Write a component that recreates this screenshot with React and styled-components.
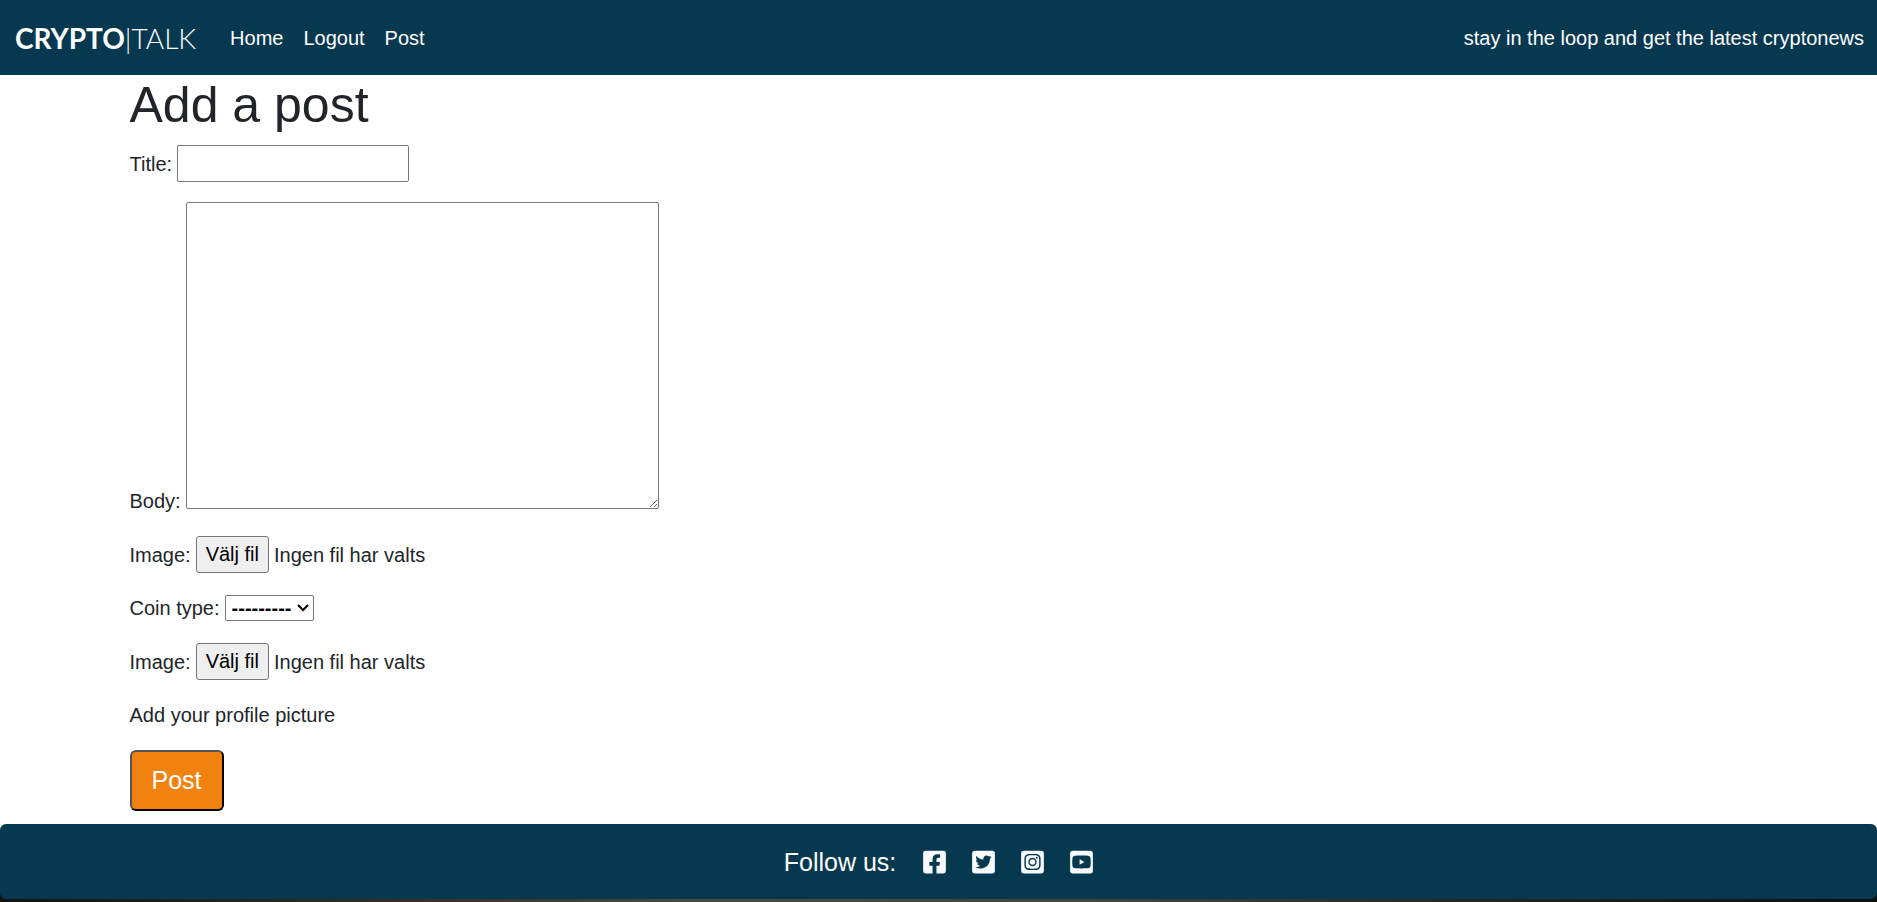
import React from "react";
import styled, { createGlobalStyle } from "styled-components";
import {
  FaFacebookSquare,
  FaTwitterSquare,
  FaInstagramSquare,
  FaYoutubeSquare,
} from "react-icons/fa";

const GlobalStyle = createGlobalStyle`
  *, *::before, *::after { box-sizing: border-box; }
  body {
    margin: 0;
    background: #ffffff;
    color: #212529;
    font-family: Arial, "Liberation Sans", sans-serif;
    font-size: 20px;
    line-height: 30px;
  }
  input, textarea, select, button { font: inherit; }
`;

const Navbar = styled.header`
  display: flex;
  align-items: center;
  min-height: 75px;
  padding: 0 13px 0 15px;
  background: #063850;
  color: #ffffff;
`;

const Brand = styled.a`
  margin-right: 24px;
  color: #ffffff;
  font-family: Lato, sans-serif;
  font-size: 28px;
  font-weight: 300;
  text-decoration: none;

  strong { font-weight: 700; }
`;

const Nav = styled.nav`
  display: flex;
  flex: 1;
`;

const NavLink = styled.a`
  padding: 10px;
  color: #ffffff;
  text-decoration: none;
`;

const Tagline = styled.span`
  white-space: nowrap;
`;

const Container = styled.main`
  max-width: 1650px;
  margin: 0 auto;
  padding: 0 16px 13px;
`;

const Heading = styled.h1`
  margin: 0 0 10px;
  font-size: 50px;
  font-weight: 400;
  line-height: 60px;
`;

const PostForm = styled.form`
  display: flex;
  flex-direction: column;
  align-items: flex-start;
  gap: 20px;
`;

const Field = styled.div`
  display: flex;
  align-items: ${(p) => p.$align || "center"};
  gap: 5px;
`;

const TextInput = styled.input`
  width: 232px;
  height: 37px;
  padding: 1px 2px;
  border: 1px solid #767676;
  border-radius: 2px;
  background: #ffffff;
`;

const TextArea = styled.textarea`
  display: block;
  width: 473px;
  height: 307px;
  margin-bottom: 7px;
  padding: 2px;
  border: 1px solid #767676;
  border-radius: 2px;
  background: #ffffff;
  resize: vertical;
`;

const SelectBox = styled.div`
  position: relative;
  display: flex;
  margin: 2px 0;

  svg {
    position: absolute;
    top: 9px;
    right: 5px;
    pointer-events: none;
  }
`;

const Select = styled.select`
  appearance: none;
  width: 89px;
  height: 26px;
  padding: 0 6px;
  border: 1px solid #767676;
  border-radius: 2px;
  background-color: #ffffff;
  color: #000000;
  font-weight: 700;
  line-height: 24px;
`;

const FilePicker = styled.label`
  position: relative;
  display: flex;
  align-items: center;
  gap: 5px;
`;

const HiddenFile = styled.input`
  position: absolute;
  inset: 0;
  width: 100%;
  opacity: 0;
`;

const FileButton = styled.span`
  height: 37px;
  padding: 2px 9px;
  border: 1px solid #767676;
  border-radius: 3px;
  background: #efefef;
  color: #000000;
`;

const Hint = styled.p`
  margin: 0;
`;

const SubmitButton = styled.button`
  padding: 10px 20px;
  border: 2px outset #000000;
  border-radius: 6px;
  background: #f2820f;
  color: #ffffff;
  font-size: 25px;
  line-height: 37px;
`;

const FooterArea = styled.div`
  padding-bottom: 3px;
  background:
    linear-gradient(#ffffff, #ffffff) top / 100% 50% no-repeat,
    linear-gradient(90deg, #15110f, #3a342c 25%, #4c493f 37%, #45443d 58%, #25221f 80%, #100d0e);
`;

const Footer = styled.footer`
  display: flex;
  align-items: center;
  justify-content: center;
  gap: 27px;
  min-height: 75px;
  border-radius: 6px;
  background: #063850;
  color: #ffffff;
  font-size: 25px;
`;

const SocialList = styled.div`
  display: flex;
  gap: 26px;
`;

const SocialLink = styled.a`
  display: flex;
  color: #f8f9fa;

  svg { width: 23px; height: 26px; }
`;

const socials = [
  ["Facebook", FaFacebookSquare],
  ["Twitter", FaTwitterSquare],
  ["Instagram", FaInstagramSquare],
  ["YouTube", FaYoutubeSquare],
];

function FileField({ id }) {
  return (
    <Field>
      <label htmlFor={id}>Image:</label>
      <FilePicker>
        <HiddenFile id={id} type="file" />
        <FileButton>Välj fil</FileButton>
        <span>Ingen fil har valts</span>
      </FilePicker>
    </Field>
  );
}

export default function App() {
  return (
    <>
      <GlobalStyle />
      <Navbar>
        <Brand href="#"><strong>CRYPTO</strong>|TALK</Brand>
        <Nav>
          <NavLink href="#">Home</NavLink>
          <NavLink href="#">Logout</NavLink>
          <NavLink href="#">Post</NavLink>
        </Nav>
        <Tagline>stay in the loop and get the latest cryptonews</Tagline>
      </Navbar>
      <Container>
        <Heading>Add a post</Heading>
        <PostForm>
          <Field>
            <label htmlFor="title">Title:</label>
            <TextInput id="title" type="text" />
          </Field>
          <Field $align="flex-end">
            <label htmlFor="body">Body:</label>
            <TextArea id="body" />
          </Field>
          <FileField id="image" />
          <Field>
            <label htmlFor="coin">Coin type:</label>
            <SelectBox>
              <Select id="coin"><option>---------</option></Select>
              <svg width="12" height="8" viewBox="0 0 12 8" fill="none" stroke="#000000" strokeWidth="2">
                <path d="M1 1 L6 6 L11 1" />
              </svg>
            </SelectBox>
          </Field>
          <FileField id="profile-image" />
          <Hint>Add your profile picture</Hint>
          <SubmitButton type="button">Post</SubmitButton>
        </PostForm>
      </Container>
      <FooterArea>
        <Footer>
          <span>Follow us:</span>
          <SocialList>
            {socials.map(([name, Icon]) => (
              <SocialLink key={name} href="#" aria-label={name}><Icon /></SocialLink>
            ))}
          </SocialList>
        </Footer>
      </FooterArea>
    </>
  );
}
